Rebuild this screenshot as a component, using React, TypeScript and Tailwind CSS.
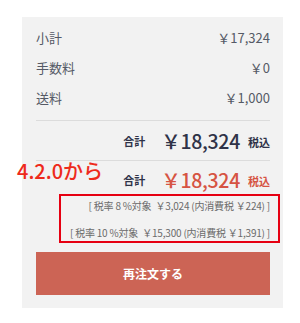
import React from "react";

const font = { fontFamily: '"Noto Sans CJK JP", "Noto Sans", sans-serif' };

function Price() {
  return <span className="text-[19.5px] font-medium leading-none tracking-[-0.3px]">￥18,324</span>;
}

export default function App() {
  return (
    <div className="relative w-[300px] h-[323px] bg-white pt-[17px]" style={font}>
      <div className="ml-[22px] mr-[17px] h-[291px] bg-[#f2f2f2] pl-[14px] pr-[13px] pt-[6px]">
        {[
          ["小計", "￥17,324"],
          ["手数料", "￥0"],
          ["送料", "￥1,000"],
        ].map(([l, v]) => (
          <div key={l} className="flex h-[30px] items-center justify-between text-[13px] text-[#555a66]">
            <span>{l}</span>
            <span>{v}</span>
          </div>
        ))}
        <div className="mt-[7px] border-t border-[#dcdcdc]" />
        <div className="flex h-[39px] items-center justify-end text-[#2f3348]">
          <span className="text-[11px] font-bold mr-[16px] mt-[2px]">合計</span>
          <Price />
          <span className="text-[11px] font-bold ml-[8px] mt-[4px]">税込</span>
        </div>
        <div className="border-t border-[#dcdcdc]" />
        <div className="flex h-[33px] items-center justify-end pt-[4px] text-[#d65443]">
          <span className="text-[11px] font-bold mr-[16px] mt-[2px] text-[#2f3348]">合計</span>
          <Price />
          <span className="text-[11px] font-bold ml-[8px] mt-[4px]">税込</span>
        </div>
        <div className="relative flex flex-col items-end text-[10px] tracking-[-0.2px] text-[#6b6b6b]">
          <div className="flex h-[22px] items-center whitespace-pre">[ 税率 8 %対象{"\u00a0\u00a0"}￥3,024 (内消費税 ￥224) ]</div>
          <div className="flex h-[27px] items-center pt-[5px] whitespace-pre">[ 税率 10 %対象{"\u00a0\u00a0"}￥15,300 (内消費税 ￥1,391) ]</div>
          <div className="absolute left-[23px] -right-[10px] top-0 bottom-0 border-2 border-[#e60012]" />
        </div>
        <button className="mt-[9px] flex h-[43px] w-full items-center justify-center bg-[#cc6455] text-[12px] font-bold text-white">
          再注文する
        </button>
      </div>
      <div className="absolute left-[17px] top-[159px] text-[20px] font-medium leading-[24px] text-[#ee2a1b]">
        4.2.0から
      </div>
    </div>
  );
}
